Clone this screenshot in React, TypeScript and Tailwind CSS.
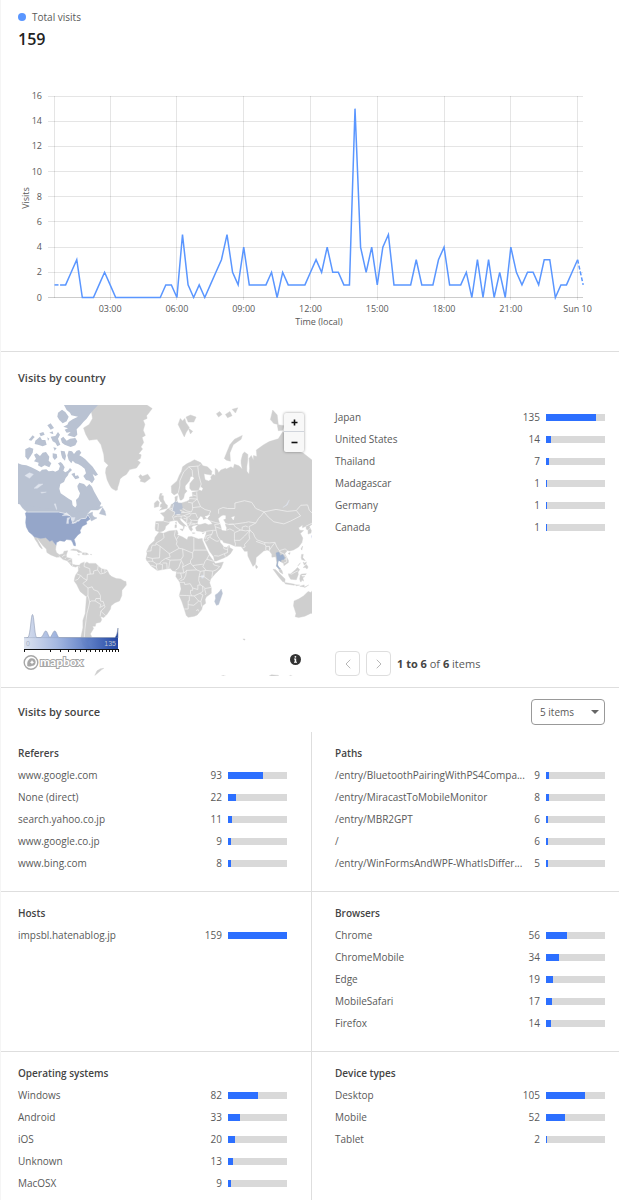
import React, { useState } from 'react';
import { ChevronLeft, ChevronRight } from 'lucide-react';

interface Row {
  label: string;
  count: number;
}

const TOTAL = 159;

const visits = [
  1, 1, 1, 2, 3, 0, 0, 0, 1, 2, 1, 0, 0, 0, 0, 0, 0, 0, 0, 0, 1, 1, 0, 5, 1, 0, 1, 0, 1, 2, 3, 5,
  2, 1, 4, 1, 1, 1, 1, 2, 0, 2, 1, 1, 1, 1, 2, 3, 2, 4, 2, 2, 1, 1, 15, 4, 2, 4, 1, 4, 5, 1, 1, 1,
  1, 3, 1, 1, 1, 3, 4, 1, 1, 1, 2, 0, 3, 0, 3, 0, 2, 0, 4, 2, 1, 2, 2, 1, 3, 3, 0, 1, 1, 2, 3, 1,
];

const timeTicks = [
  { index: 10, label: '03:00' },
  { index: 22, label: '06:00' },
  { index: 34, label: '09:00' },
  { index: 46, label: '12:00' },
  { index: 58, label: '15:00' },
  { index: 70, label: '18:00' },
  { index: 82, label: '21:00' },
  { index: 94, label: 'Sun 10' },
];

const countries: Row[] = [
  { label: 'Japan', count: 135 },
  { label: 'United States', count: 14 },
  { label: 'Thailand', count: 7 },
  { label: 'Madagascar', count: 1 },
  { label: 'Germany', count: 1 },
  { label: 'Canada', count: 1 },
];

const sources: { title: string; rows: Row[] }[] = [
  {
    title: 'Referers',
    rows: [
      { label: 'www.google.com', count: 93 },
      { label: 'None (direct)', count: 22 },
      { label: 'search.yahoo.co.jp', count: 11 },
      { label: 'www.google.co.jp', count: 9 },
      { label: 'www.bing.com', count: 8 },
    ],
  },
  {
    title: 'Paths',
    rows: [
      { label: '/entry/BluetoothPairingWithPS4Compa...', count: 9 },
      { label: '/entry/MiracastToMobileMonitor', count: 8 },
      { label: '/entry/MBR2GPT', count: 6 },
      { label: '/', count: 6 },
      { label: '/entry/WinFormsAndWPF-WhatIsDiffer...', count: 5 },
    ],
  },
  { title: 'Hosts', rows: [{ label: 'impsbl.hatenablog.jp', count: 159 }] },
  {
    title: 'Browsers',
    rows: [
      { label: 'Chrome', count: 56 },
      { label: 'ChromeMobile', count: 34 },
      { label: 'Edge', count: 19 },
      { label: 'MobileSafari', count: 17 },
      { label: 'Firefox', count: 14 },
    ],
  },
  {
    title: 'Operating systems',
    rows: [
      { label: 'Windows', count: 82 },
      { label: 'Android', count: 33 },
      { label: 'iOS', count: 20 },
      { label: 'Unknown', count: 13 },
      { label: 'MacOSX', count: 9 },
    ],
  },
  {
    title: 'Device types',
    rows: [
      { label: 'Desktop', count: 105 },
      { label: 'Mobile', count: 52 },
      { label: 'Tablet', count: 2 },
    ],
  },
];

// Outlines are "lon,lat" pairs, projected with Web Mercator below
const land = [
  // Greenland
  '-73,78.4 -68,79 -65,80 -66,81 -61,82.3 -30,83 -18,82 -12,81.4 -15,80.8 -17,80.4 -16.5,80 -20,79.7 -18.5,79 -20,78 -18,77 -21,76.6 -19.5,75.5 -22,74.5 -20.5,74 -24,72.8 -21.8,72.5 -22.5,71.5 -25,71 -22.5,70.3 -26,68.6 -32,68.1 -35,66.4 -38,65.7 -40.5,64.8 -41.5,63 -42.5,61.5 -43,60.2 -44.5,60 -48,61 -50,62.5 -52,64.5 -53.5,67 -53,68.5 -51,69.5 -54.5,70.6 -55,72.5 -57.5,75 -61,76.2 -68,76 -71,77.2',
  // Mexico and Central America
  '-114.8,32.3 -112,29 -109,25.5 -106,22.8 -105.5,20 -102,18 -97,16 -94,16.2 -91,14 -87.5,13 -85.7,11 -83.5,8.5 -80,7.4 -78,8.5 -77,7 -77,9 -80,9.2 -83,10 -83.5,15 -88,15.8 -88.3,18 -87,21.5 -90.3,21 -91,19 -94.5,18.2 -97,20 -97.8,22.5 -97.3,26 -101,29.8 -103,29 -106.5,31.8 -111,31.3',
  '-117,32.5 -114.8,32 -112.5,28 -109.5,23.2 -110.5,23.3 -112.2,25 -114,28 -116,30.5',
  '-84.5,22 -82,23 -78,22.3 -74.3,20.2 -77.5,20 -79,21.5',
  '-74,19.8 -70,19.7 -68.5,18.5 -71,18 -74,18.3',
  '-78.2,18.4 -76.4,18.1 -77.5,17.9',
  '-67,18.4 -65.7,18.4 -66,18',
  // South America
  '-77.5,8 -75.5,10.6 -72,12 -71.5,10.7 -70,12 -68,10.7 -62,10.7 -60,8.5 -57,6 -52,5 -50,1 -48,-1 -44,-2.7 -40,-3 -37,-5 -35.3,-5.3 -35,-8.5 -38.8,-13 -39,-17.5 -41,-22 -45,-23.5 -48.5,-26 -49,-28.5 -52,-32.5 -55,-35 -58,-34.2 -56.8,-36.5 -58,-38.3 -62,-39 -62.5,-41 -65,-41 -64,-42.5 -67,-46 -65.8,-47.5 -69,-50.5 -68.5,-52.5 -65.5,-54.8 -69,-55.5 -73.5,-52.5 -75.5,-48.5 -73.5,-42 -73.5,-37 -71.5,-32 -70.3,-18.5 -76,-14 -79,-8 -81.3,-5 -80.8,-2 -80,0.5 -77.5,4',
  // Africa
  '-17.5,14.7 -16.5,19 -17,21 -14.5,26 -10,29.5 -9.5,32 -6,35.8 -2,35.1 3,36.8 10,37.3 11,35 10.2,34 15,32.4 19,30.3 20,32.5 23,32.7 29,30.9 32.5,31.2 32.6,29.8 34.5,26 35.6,23.5 37.3,20.5 38.5,18 41,14.8 43.2,12 44,10.5 48,11.2 51.2,11.8 49,6.5 44,1.5 40,-3 39,-6.5 40.5,-11 40.5,-15.5 36,-18.8 35,-21 35.5,-24 32.7,-26 32,-29 28,-33 25.5,-34 20,-34.8 18.3,-33.5 16.5,-28.5 14.5,-23 12,-17.5 13.7,-12 12.5,-6 9,-1 9.7,3.5 6,4.3 4,6.4 0,5.7 -7.5,4.4 -13,8.5 -15,11 -16.8,13',
  // Europe and Asia
  '-9,37 -9.4,38.7 -8.8,43.2 -1.8,43.4 -1.2,46 -4.7,48.4 -1.5,48.7 1.6,50.7 4,51.5 5,53.3 8.5,53.8 8.2,57 10.5,57.6 10,55 11,54 14,54 18.5,54.8 21,55.5 21.2,57 24,57.2 23.5,59.2 28,59.6 30,60 23,60 21.3,61 21.5,63 25.3,65 24,65.8 22,65.6 21,64 17.3,62 17.3,60.6 19,59.8 16.7,58.5 16,56.5 14.2,55.5 12.8,55.5 11,59 7.5,58 5.2,59 5,62 10,64 12,66 14,67.5 15,69 19,70 22,70.5 25.5,71.1 31,70.3 33,69.3 37,69 41,67.5 40.5,66.2 34,66.7 34.5,65.5 35,64.5 38,64 40.5,64.6 40,65.5 42,66.5 44,66 44,68.5 46,68 47,67 49,68 53,68.5 54,68.3 58,69 60,68.5 61,69.8 65,69.3 68,68.3 67,70 67,71 68.5,72.8 70,73.2 73,72.6 72.8,71 72,69 72,67.5 74,66.5 74.5,68.5 74,71.5 76,72.3 78,71 78,72.3 81,72 80.5,73.7 87,75 92,75.7 100,76.3 104,77.7 108,76.8 113,76 108,74 113,73.8 122,73 130,71 140,72 140,50 131,43 129.5,41 127.5,39.8 129.4,37 129,35.2 126.5,34.5 126.5,37.5 125,38 124.5,40 121.5,39 121.5,40.8 118,39 119,37.3 122.5,37 119.5,35 121.8,31.5 121,28 118,24.5 113.5,22.2 110,21.3 108,21.6 105.8,19 109,13.5 109,11.5 105,8.7 104.8,10.5 102.5,12 101,13.5 100,13.3 99.3,9.5 100.5,7.2 103.3,4.5 104,1.4 101.3,3 100.3,6 98.3,8.5 98.7,11.5 97.7,16.5 94.3,16 94.2,18.5 92,21.5 90,22 87,21.3 85,19.5 80.3,15.7 80,12 79.5,10 77.5,8.1 76,11 73,17 72.7,21 70,21 69,22.3 67,25 61.5,25.2 57,27 51.5,28 50,30 48,30 48.5,28 50.5,26 51.5,24.5 54,24.2 56.3,26 57,24 59.8,22.5 57.5,19 55,17 52,15.6 45,12.8 43.3,12.7 42.5,16.5 39,21 37,25 34.8,29 34,30 34.4,31.3 36,35 36,36.8 32.5,36.1 30.5,36.5 27.5,36.8 26.5,39 29,41 31,41.2 35,42 38,41 41.5,41.6 39.5,43.7 37,45 39,47.2 35,46.2 36.5,45.3 33.5,44.5 32.7,46 31,46.6 28.8,44.5 28,41.8 29,41 26,40.7 23.8,40.3 23,39 24,38 22.7,36.5 21.3,37.7 19.4,41 19,42 14,45.3 12.3,45.2 13.6,43.6 16,41.8 18.5,40 16.8,40.4 16,38 15.6,40 12.3,41.7 10.2,43.9 7.5,43.8 3.2,43.2 3,41.8 0,40 -0.5,38 -2,36.8 -5.5,36',
  // British Isles and Iceland
  '-5.5,50 1.3,51.2 1.6,52.8 0,53.5 -2,55.8 -2,57.6 -4,57.7 -3,58.6 -5,58.6 -6,56.5 -4.8,54.8 -3,54 -4.5,53.2 -5,51.8 -3,51.5',
  '-10,51.6 -6.3,52.2 -5.7,54.5 -7.5,55.3 -10,54',
  '-24,65.6 -22.5,66.4 -20.5,65.8 -16,66.5 -13.6,65 -18.5,63.4 -22.7,63.9 -22,64.5',
  // Arctic
  '11,79 13,80 15,79.6 17,80 18,79.3 21,78.5 18,77.5 16.5,76.7 14,77.8',
  '18,80.2 22,80.5 27,80.2 25,79.4 20,79.4',
  '20,78.4 24,77.8 22,77.3',
  '52,71.5 54,73 57,75 61,76.2 68,77 67,76.2 60,75 57,73 57.5,70.7 54,71',
  '45,80.7 48,81 50,80.6 47,80.2', '53,80.6 57,81 59,80.4 55,80.1', '59,81.3 64,81.5 62,80.8',
  '93,79.8 95,81.2 99,80.5 100,79 96,79.2', '99,79 105,78.8 104,78 100,77.9',
  // Mediterranean
  '12.5,38 15.5,38.2 15,36.8', '8.2,39 8.3,41 9.6,41 9.6,39.2', '8.6,42.5 9.5,43 9.4,41.5', '23.6,35.5 26.2,35.2 24,34.9', '32.3,35 34.5,35.6 33,34.6',
  // Southern and eastern Asia
  '80,9.6 81.8,7.5 80.5,6 79.8,7.5',
  '95.3,5.6 97.5,5.2 103.7,-1 106,-3 105.8,-5.8 104,-5.5 100.5,-1.5',
  '105.2,-6.2 108.5,-6.7 114.5,-7.7 114.3,-8.7 106.5,-7.4',
  '109,1.5 111,1.5 115,5 117,7 119,5.2 117.5,3 117.8,1 116,-3.8 111,-3.3 109.3,-0.5',
  '119.5,0.5 121,1.2 125,1.6 124,0.5 120.3,0.4 121.3,-1 123.5,-1 121.8,-2 122.5,-5 121,-4 120.3,-5.5 119.5,-5.3 119,-3',
  '115,-8.2 119,-8.5 116,-9', '119,-9.5 123,-8.3 123,-10.3 127,-8.4 124,-10.3',
  '120.3,16 120.8,18.5 122.2,18.4 121.7,15.8 124,13 120.8,14', '122,7 125,9.7 126.5,7.5 125.5,5.8 124,7', '122,11.8 123.5,11 125,12 124.5,10.2 123,9.2', '117.3,8.5 119.5,11.2 118.3,9.2',
  '120.2,23 121.6,25.3 121,22', '108.7,19.2 110.5,20.1 110,18.4',
  // Australia
  '136,-12.2 131,-12 129,-15 126.5,-14 124,-16.5 122.3,-18 118,-20.4 114,-22 113.5,-26 115.7,-32 115,-34.3 118,-35 123.5,-34 129,-31.7 136,-34',
  // Southern islands and Antarctic coast
  '68.6,-49 70.5,-49.1 70,-49.7',
  '-55,-63.3 -58,-63.5 -61,-64.3 -63,-66 -60.5,-65.2 -57,-63.9',
  '48,-66.5 51,-66 54,-66.4', '92,-66.2 94,-65.8 100,-66 101,-66.5', '109,-66.4 111,-66 113,-66.4',
];

const southernCanada = [
  '-132,57 -90,56 -83,52.8 -80,51.3 -79,51.2 -60,52.2 -56,52 -60,50.2 -66.5,50.2 -70,47.5 -65,49 -65,47.2 -63.5,46 -61,45.5 -66,43.5 -67,45 -67.8,47 -69.2,47.4 -71,45.2 -75,45 -79,43.3 -82.5,42 -82.5,45.3 -84.5,46.5 -88.5,48 -95,49 -123,49 -125,50 -127.5,51.5 -130,54 -132,56',
  '-59,48 -53,47 -54,49.5 -56,51.5',
];

// Northern coast and the Arctic islands are drawn straight in map space, three units per pixel
const northernCanada = [
  'M0 178 12 182 25 184 40 190 52 196 66 203 72 197 85 196 92 202 105 200 112 203 122 198 126 186 120 178 128 174 134 180 140 190 136 200 142 205 150 200 156 192 162 198 152 208 150 214 143 222 138 234 127 240 124 254 128 268 140 276 152 284 162 290 164 306 171 312 176 304 174 288 182 280 186 268 180 256 178 246 184 236 198 240 206 248 214 240 222 248 228 262 236 276 244 290 250 298 244 310 171 326 0 300Z',
  // Baffin
  'M152 140 162 142 168 150 176 140 184 138 190 146 184 154 192 158 202 166 212 176 224 188 232 200 240 212 232 216 224 210 230 226 222 238 214 230 204 228 196 216 204 208 200 194 190 186 180 180 172 178 164 170 160 178 152 168 148 154Z',
  'M160 210 170 206 172 216 180 214 184 222 172 226Z',
  'M128 140 140 142 144 156 141 170 133 162 130 152Z',
  'M104 148 116 150 118 160 110 168 104 160Z',
  // Victoria and Banks
  'M48 152 56 148 66 156 74 146 84 144 94 158 92 170 100 178 94 190 80 184 70 190 60 184 62 176 48 172 54 164Z',
  'M22 136 34 130 46 134 44 146 38 156 30 168 22 158Z',
  // Ellesmere and Axel Heiberg
  'M138 3H240L228 16 216 30 206 44 196 54 188 64 176 76 178 92 170 100 148 94 158 84 146 86 140 77 150 73 136 68 148 62 152 54 164 46 180 38 160 34 156 26 146 18Z',
  'M120 26 132 17 142 24 152 38 146 52 134 58 124 48 118 38Z',
  // Devon, Bathurst, Melville
  'M128 104 136 98 146 110 156 104 172 102 178 112 172 124 158 129 140 122 132 116Z',
  'M98 98 112 96 120 84 126 92 120 104 127 122 118 127 112 116 104 112Z',
  'M52 110 66 98 72 108 82 108 86 122 74 127 60 122 50 120Z',
  'M32 108 44 94 50 99 40 110Z',
  'M64 88 76 84 80 92 68 97Z',
  'M88 64 98 58 108 72 98 77Z',
  'M94 86 104 82 106 91Z',
  'M88 100 94 104 90 110Z',
  'M106 130 116 132 110 140Z',
];

const unitedStates =
  '-124.7,48.4 -124,46 -124.4,42.5 -123.8,39.5 -121.5,36 -118.5,34 -117,32.5 -111,31.3 -106.5,31.8 -103,29 -101,29.8 -97.3,26 -97,28 -94,29.5 -90,29 -88,30.4 -84,30 -82.7,28 -81.7,25.8 -80.2,25.3 -80,27 -81.3,30.5 -78,33.9 -75.6,35.3 -76,37 -74,40 -70,41.6 -70.5,43 -67,44.8 -67.8,47 -69.2,47.4 -71,45.2 -75,45 -79,43.3 -82.5,42 -83.5,45.5 -84.5,46.5 -88.5,48 -95,49 -123,49';

const lowTraffic = [
  // Germany, Madagascar
  '6.2,53.4 8.5,54.8 10,54.8 11,54 14.2,53.8 15,51 12.3,50.2 13.8,48.7 12.8,47.6 7.7,47.6 8.1,49 6.2,49.8',
  '49.3,-12 50.4,-15.7 48.5,-21 47,-25 45,-25.6 43.4,-22.5 44.3,-20 44,-17 46,-15.7 48,-13.8',
];
const thailand = '98,19.7 100.2,20.4 101.2,19.2 101.5,17.6 104,18.3 105.6,15.4 105.3,14.3 102.5,13.7 102.5,12.3 101,12.8 100.3,13.5 99.5,11 99.3,9.3 100.5,7.2 102,6.2 100.5,6 98.4,8.3 99.2,11.8 98.8,15.5';
const kyushu = '129.8,33.3 131.8,33.7 131.2,31.2 130.2,31.3';

const water = [
  '47,45 49,46.4 51,47 53,46.8 53,45 51,44.5 53,42 52.7,41 53.8,39 53.5,37 50,37.4 49,40.5',
  '58.5,45.8 61,46.4 60,44.2',
  '39.2,47.2 35,46.2 37,45.6',
  '29.5,60.5 31,61.6 32.8,61 32,60',
];
const lakes = [
  '-88,41.8 -86.3,41.8 -86.3,44 -85,45.8 -87.5,45.5', '-83.5,42 -79,42.8 -80,42.2', '-92,46.8 -88,48.7 -84.8,46.7 -88,46.9', '-83.5,45.8 -80.5,45.8 -81.7,43.3 -83.4,44', '-79.5,43.5 -76.3,44 -77,43.3',
  '-99,53.5 -97.8,53.6 -96.6,50.6 -97,50.4', '-117,61 -113,62.7 -109,62.8 -114,61', '-125,66 -121,67 -117.5,66.5 -121,65', '-111,59.2 -106,59.3 -110,58.8',
  '31.8,0.3 34,0.2 33.5,-2.3 32,-2.4', '104,51.6 108,53 109.8,55.6 107,53',
];

const borders = [
  // Americas
  '-95,17 -92.2,14.6', '-92,16 -90.5,17.8 -89,17.8', '-89.5,14.5 -88.5,15.7', '-87,13.2 -83.2,15', '-85.5,11.2 -83.7,11', '-83,8.3 -82.5,9.6',
  '-77.5,8 -76,7.2', '-72,12 -72.5,8 -70,7 -67.5,6 -67,1.2', '-67,1.2 -64,1.5 -64,4 -60.5,5 -60,8.5', '-60.5,5 -58,1.3 -54,2.3 -51.5,4.3', '-57,5.9 -57.3,3.3 -56,2', '-54,5.8 -54,2.3', '-67,1.2 -69.5,1 -69.9,-4.2 -73,-2.5 -75.5,0 -79,1.5', '-75.5,0 -78,-3.5 -80.3,-4.3', '-69.9,-4.2 -73.5,-7 -70.5,-10 -69,-11 -69,-17.5 -70.3,-18.5', '-69,-11 -65.3,-10 -64,-12.5 -60,-14 -58,-17.5 -58,-20 -62,-20 -62.7,-22 -66,-22 -67.5,-23 -69,-17.5', '-58,-20 -57.8,-22.2 -55.5,-22.5 -54.5,-25.5 -58.5,-27.3 -57.5,-25 -62.7,-22', '-54.5,-25.5 -53.8,-27 -57.6,-30.2 -58.2,-34', '-57.6,-30.2 -53.4,-33.5', '-67.5,-23 -68.5,-27 -70,-32 -70.8,-37 -71.8,-43 -72.5,-50 -68.5,-52.3', '-71.7,19.7 -71.7,18',
  // Africa
  '-17,21 -13,21.4 -13,23 -12,26 -8.7,26 -8.7,27.6 -3,30.5 -1.5,32 -2,35', '-8.7,27.2 -4.8,25 3,19.2 4.3,19.5 12,23.5 9.5,26.5 10,29 9.5,30.3 7.7,33.5 8.5,37', '9.5,30.3 11.5,33', '12,23.5 15,23 24,19.5 24,20 25,22 25,31.7', '25,22 36.5,22', '15,23 15.5,17 13.5,13.8 14,12.8 15.5,10 15,7.5 22,11 24,8.8 27.5,5', '24,19.5 24,15.7 22,13 22,11', '13.5,13.8 4,13.5 3.5,11.8 2.7,6.4', '4,13.5 0,15 -4,12.5 -5.5,10.3 -8,10.2 -8.3,7.5 -7.5,4.4', '3,19.2 4,16 0,15', '-5,25 -5.5,15.5 -12,15 -11.5,12.4 -8,10.2', '-16.5,16 -12,15', '-16.7,12.4 -13.7,12.6 -11.5,12.4', '-13,9 -10.5,8.4 -8.3,7.5', '-5.5,10.3 -2.8,9.7 -3,5', '-2.8,11 1,11 1.2,6', '13.5,12.5 11.5,6.6 8.7,4.7', '15,7.5 16.2,2.2 9.8,2.2', '16.2,2.2 18.5,4.5 27.5,5 30.8,3.6 29.6,-1 29.3,-4.4 30.7,-8.3 28.5,-8.5 28.5,-12.3 24,-11 21.8,-7.3 17,-8 16.6,-6 12.5,-6', '18.5,4.5 17.8,0 16,-3.5 13,-4.6', '13.3,2.2 14.3,-2 11.3,-3.9', '12,-17.3 18.5,-17.5 23.3,-17.7 22,-16 22,-13 24,-13 24,-11', '21,-18.2 21,-22 20,-22 20,-28.5 16.5,-28.5', '20,-25 25,-25.6 29.3,-22.2 25.3,-17.8 23.3,-17.7', '29.3,-22.2 31.3,-22.4 32,-26.7', '31.3,-22.4 33,-17 30.3,-15.7 33,-14 32.8,-9.3 30.7,-8.3', '25.3,-17.8 30.3,-15.7', '32.8,-9.3 35,-11.5 40.4,-10.5', '34.5,-11.5 35.8,-16 35,-17', '29.6,-1 34,-1 39.2,-4.7', '30.8,3.6 34,4.3 34,-1', '34,4.3 36,4.5 41.8,3.9 41,-1.7', '41.8,3.9 45,5 48,8 43,9.3 42,11', '36,4.5 33,8 35,12.5 36.5,14.3 42.5,12.5', '36.5,14.3 38.5,18', '24,8.8 28,9.4 33,10', '27,-29.8 28.8,-28.8 29.2,-30.3',
  // Europe
  '-8.8,41.9 -6.5,41.8 -7,37.3', '-1.8,43.4 3.2,42.5', '2.5,51 6,49.6 8.1,49 7.5,47.5 6,46.3 7.5,43.8', '7,45.9 10.5,46.6 13.7,46.5 13.8,45.5', '9.5,47.5 13,47.6', '3.4,51.3 6,50.8 6.2,49.8', '7,53.3 6,50.8', '15,51 18.8,49.6 22.8,49.1 24,50.8 23.5,54 19.8,54.4', '17,48.8 12.5,50.2', '13.8,48.7 17,48.8 22,48.3 16.2,46.8 13.7,46.5', '16.2,46.8 18.8,45.9 21,46.2 22.8,48 26.6,48.2 28.2,45.5', '18.8,45.9 19,44.8 15.8,45.2', '21.2,45 22.6,44 28.6,43.8', '22.6,44 22.4,42.3 26.3,41.7 28,42', '19.3,42 22.4,42.3 21,40.8', '20,39.8 21,40.8 26.3,41.5', '19,44.8 18.5,42.5', '23.5,54 28,56 31,52 24,51.5', '31,52 35,50.4 40,49.6 38.3,47.2', '21,56.3 28,56 27.5,59.2', '24,58 27.3,57.5', '30,60.5 31.5,62.8 29.5,66 28.5,69 30.8,69.8', '24,65.8 23.5,67.9 20.6,69 28.8,69.2', '11.2,59 12.5,62 12.5,64 16,67.3 20.6,69', '9,54.8 10,54.8',
  // Asia
  '47,48 47,50.5 51,51.6 55,51 61.5,51 61.5,54 70,55.2 76.5,54.3 80,51 87.3,49.1 85,47 82.5,45.2 80,42.2 73.5,43 71,42.5 66,42 61,41.5 56,41.3 52.5,42', '87.3,49.1 91,46 96,43 105,41.6 111,43.5 119.8,46.7 116,49.9 108,49.4 98,50.5 87.3,49.1', '116,49.9 120,52.8 126,53 127.5,50 131,47.8', '131,45 131,43', '124.3,40 130.5,42.3', '126.7,37.8 128.3,38.6', '80,42.2 74,39.8 74.8,37.3 71,36.8 66.5,37.4 61,35.5 61,31.5 61,29.8 66,29.8 70,33 74.8,37.3', '56,41.3 60,41.5 62,39.5 66.5,37.4', '67.8,37.2 68,39.5 71,40.2 73,39.5', '54,37.3 57,38.2 61,36.5', '61,29.8 62,27 61.6,25.2', '74.8,37.3 78,35 79,32.5 81,30.2 88,28 92,27.8 97,28.2 98.7,24.5 101,21.5 106,23 108,21.6', '74.8,37.3 74,34.5 74.5,31 70,26.5 70.5,24.5 68,23.7', '80.3,29 88,26.5 88,28', '88.3,26.5 89,25 88.8,22', '89,25 92.2,25 92.2,21.5', '92.2,22 94,24.5 97,28', '101,21.5 102,20 105,18.8 107.5,15.5 107.5,12 105,11', '105.5,14.3 107.5,14.5', '48.5,30 46,33 44.8,37.2 44,39.7 43.5,41.2 47,41.5 48.3,42', '44.8,37.2 42.3,37.2 36,36.5', '41,34.4 42,37', '39,32.2 41,34.4 35.9,33', '47.7,30 46.5,29.1 44.7,29.2 39,32.2 37,31.5 38,30.5 36,29.2 35,29.4', '35.8,33 35.5,31', '44,39.7 48.8,38.5', '40,43.5 44,42.5 48.5,41.8', '55.7,26 55,22.5 52,22.9 51.2,24.4', '55,20 52,19 47,17 43,17.3', '52,19 53,16.6', '55,22.5 55,20', '109.5,1.8 112,1.2 115,3 117.5,4.2',
];

const project = (pair: string) => {
  const [lon, lat] = pair.split(',').map(Number);
  const mercator = Math.log(Math.tan(Math.PI / 4 + (lat * Math.PI) / 360));
  return `${(147.7 + 1.126 * lon).toFixed(1)},${(170.5 - 64.5 * mercator).toFixed(1)}`;
};
const toPoints = (outline: string) => outline.split(' ').map(project).join(' ');

function Shapes({ outlines, fill }: { outlines: string[]; fill: string }) {
  return (
    <g fill={fill} stroke={fill} strokeWidth="0.4" strokeLinejoin="round">
      {outlines.map((outline) => (
        <polygon key={outline} points={toPoints(outline)} />
      ))}
    </g>
  );
}

function VisitsChart() {
  const x = (i: number) => 53.5 + i * 5.565;
  const y = (v: number) => 217.5 - v * 12.59;
  const points = (from: number, to: number) =>
    visits.slice(from, to + 1).map((v, i) => `${x(from + i)},${y(v)}`).join(' ');
  const last = visits.length - 1;

  return (
    <svg viewBox="0 0 618 271" className="block w-full" role="img" aria-label="Visits over time">
      <g stroke="#000" strokeOpacity="0.1" shapeRendering="crispEdges">
        {[2, 4, 6, 8, 10, 12, 14, 16].map((v) => (
          <line key={v} x1="47" x2="582" y1={y(v)} y2={y(v)} />
        ))}
        <line x1="53.5" x2="53.5" y1={y(16)} y2={y(0)} />
        {timeTicks.map((t) => (
          <line key={t.index} x1={x(t.index)} x2={x(t.index)} y1={y(16)} y2="220" />
        ))}
        <line x1="47" x2="582" y1={y(0)} y2={y(0)} strokeOpacity="0.2" />
      </g>
      <g fill="none" stroke="#5a96ff" strokeWidth="1.5">
        <polyline points={points(0, 1)} strokeDasharray="4 2" />
        <polyline points={points(1, last - 1)} />
        <polyline points={points(last - 1, last)} strokeDasharray="4 2" />
      </g>
      <g fontSize="9" fill="#595959">
        {[0, 2, 4, 6, 8, 10, 12, 14, 16].map((v) => (
          <text key={v} x="41" y={y(v) + 3} textAnchor="end">{v}</text>
        ))}
        {timeTicks.map((t) => (
          <text key={t.index} x={x(t.index)} y="232" textAnchor="middle">{t.label}</text>
        ))}
        <text x="318" y="245" textAnchor="middle">Time (local)</text>
        <text transform="translate(28 118) rotate(-90)" textAnchor="middle">Visits</text>
      </g>
    </svg>
  );
}

function MapLegend() {
  const ticks = [6, 32, 42, 50, 57, 62, 68, 72, 77, 81, 84, 88, 91, 94, 97, 100];
  return (
    <g>
      <defs>
        <linearGradient id="legend-scale">
          <stop offset="0" stopColor="#d9e0ee" />
          <stop offset="0.35" stopColor="#9db2de" />
          <stop offset="0.7" stopColor="#4f72c0" />
          <stop offset="1" stopColor="#12389c" />
        </linearGradient>
      </defs>
      <path
        d="M6 233 L10 232.5 C12.5 230 13 209.5 14.5 209.5 C16 209.5 16.5 230 18.5 232.5 H23 C25.5 231 26 226 27.8 226 C29.5 226 30 231 32 232.5 C34 231 35 226 36.7 226 C38.5 226 39 231 41 232.5 H97 C98.5 231 99.5 227 100 223 V233 Z"
        fill="url(#legend-scale)"
        stroke="#8f9bb3"
        strokeWidth="0.6"
      />
      <rect x="6" y="233" width="94" height="11" fill="url(#legend-scale)" fillOpacity="0.92" />
      <path d="M6 244.5 H100.5" stroke="#111" />
      <g stroke="#111" strokeWidth="1">
        {ticks.map((t) => (
          <line key={t} x1={t + 0.5} x2={t + 0.5} y1="244" y2="247" />
        ))}
      </g>
      <g fontSize="7" fontFamily="Liberation Sans, Arial, sans-serif" fill="#bcc3d1">
        <text x="8" y="241" fill="#a9b2c4">0</text>
        <text x="98" y="241" textAnchor="end">135</text>
      </g>
    </g>
  );
}

function MapboxLogo() {
  return (
    <g stroke="#a6a6a6">
      <circle cx="13" cy="257.5" r="6.8" fill="#fff" strokeWidth="1.4" />
      <path d="M9.6 261 C9 256 11 253.5 13.8 253.5 A3.6 3.6 0 0 1 13.8 260.7 C12.5 261.3 11 261.3 9.6 261 Z" fill="#a6a6a6" strokeWidth="0.5" />
      <path d="M14 255 l0.8 1.5 1.5 0.7 -1.5 0.7 -0.8 1.5 -0.7 -1.5 -1.5 -0.7 1.5 -0.7 Z" fill="#fff" stroke="none" />
      <text
        x="22"
        y="261"
        fontSize="12"
        fontWeight="700"
        fontFamily="Lato, sans-serif"
        fill="#fff"
        strokeWidth="2"
        paintOrder="stroke"
      >
        mapbox
      </text>
    </g>
  );
}

function WorldMap() {
  return (
    <div className="relative">
      <svg viewBox="0 0 294 271" className="block w-full" role="img" aria-label="Visits by country map">
        <Shapes outlines={land} fill="#cfcfcf" />
        <Shapes outlines={southernCanada} fill="#b9c2d2" />
        <g transform="translate(0 -1) scale(0.3333)" fill="#b9c2d2">
          {northernCanada.map((d) => (
            <path key={d} d={d} />
          ))}
        </g>
        <Shapes outlines={[unitedStates]} fill="#95a6c9" />
        <Shapes outlines={lowTraffic} fill="#b9c2d2" />
        <Shapes outlines={[thailand]} fill="#9db0cd" />
        <Shapes outlines={[kyushu]} fill="#7b8fd0" />
        <Shapes outlines={water} fill="#fff" />
        <Shapes outlines={lakes} fill="#dfe4ee" />
        <g fill="none" stroke="#f3f3f3" strokeWidth="0.7" strokeLinejoin="round">
          {borders.map((line) => (
            <polyline key={line} points={toPoints(line)} />
          ))}
          <polyline points={toPoints('-123,49 -95,49 -88.5,48 -84.5,46.5 -82.5,42 -79,43.3 -75,45 -71,45.2 -69.2,47.4 -67,45')} />
        </g>
        <MapLegend />
        <MapboxLogo />
      </svg>
      <div className="absolute right-2 top-2 flex w-5 flex-col divide-y divide-gray-300 rounded-xs bg-[#f8f8f8] shadow-[0_0_3px_rgba(0,0,0,0.4)]">
        <button type="button" aria-label="Zoom in" className="flex h-[19px] items-center justify-center">
          <svg width="7" height="7" viewBox="0 0 7 7" stroke="#111" strokeWidth="1.6">
            <path d="M0.5 3.5 H6.5 M3.5 0.5 V6.5" />
          </svg>
        </button>
        <button type="button" aria-label="Zoom out" className="flex h-5 items-center justify-center">
          <svg width="7" height="7" viewBox="0 0 7 7" stroke="#111" strokeWidth="1.6">
            <path d="M0.5 3.5 H6.5" />
          </svg>
        </button>
      </div>
      <button type="button" aria-label="Map attribution" className="absolute bottom-[11px] right-[11px]">
        <svg width="11" height="11" viewBox="0 0 11 11" className="block">
          <circle cx="5.5" cy="5.5" r="5.5" fill="#333" />
          <path d="M4 4.5 H6.2 V7.8 H7 V8.8 H4 V7.8 H4.7 V5.4 H4 Z" fill="#fff" />
          <circle cx="5.4" cy="2.8" r="0.9" fill="#fff" />
        </svg>
      </button>
    </div>
  );
}

function StatTable({ rows, label }: { rows: Row[]; label: string }) {
  return (
    <table aria-label={label} className="w-full border-collapse">
      <tbody>
        {rows.map((row) => (
          <tr key={row.label} className="h-[22px]">
            <th scope="row" className="w-full whitespace-nowrap p-0 text-left font-normal">{row.label}</th>
            <td className="p-0 text-right">{row.count}</td>
            <td className="p-0 pl-1.5">
              <div className="h-[7px] w-[59px] bg-[#d9d9d9]">
                <div className="h-full bg-[#2c6fff]" style={{ width: `${(row.count / TOTAL) * 100}%` }} />
              </div>
            </td>
          </tr>
        ))}
      </tbody>
    </table>
  );
}

export default function App() {
  const [items, setItems] = useState('5');

  return (
    <main className="min-h-screen w-full border-l border-[#f5f5f5] bg-white font-['Open_Sans','Noto_Sans',sans-serif] text-[10px] leading-4 text-[#595959]">
      <section className="border-b border-[#dedede]">
        <div className="px-[17px] pt-[9px]">
          <div className="flex items-center gap-1.5">
            <span className="size-2 rounded-full bg-[#5a96ff]" />
            <span>Total visits</span>
          </div>
          <p className="mt-1 text-base leading-5 font-semibold text-[#222]">{TOTAL}</p>
        </div>
        <div className="mt-[31px]">
          <VisitsChart />
        </div>
      </section>

      <section className="border-b border-[#dedede] pb-[11px] pl-[17px] pr-3.5 pt-4">
        <h2 className="text-[11px] leading-5 font-semibold text-[#444]">Visits by country</h2>
        <div className="mt-[17px] grid grid-cols-[294fr_270fr] gap-x-[23px]">
          <WorldMap />
          <div className="flex flex-col justify-between pt-px">
            <StatTable rows={countries} label="Visits by country" />
            <div className="flex items-center gap-1.5">
              <button type="button" disabled aria-label="Previous page" className="flex size-[25px] items-center justify-center rounded-sm border border-[#dedede] text-[#b8b8b8]">
                <ChevronLeft size={16} strokeWidth={1.5} />
              </button>
              <button type="button" disabled aria-label="Next page" className="flex size-[25px] items-center justify-center rounded-sm border border-[#dedede] text-[#b8b8b8]">
                <ChevronRight size={16} strokeWidth={1.5} />
              </button>
              <p className="text-[11px]">
                <b className="text-[#444]">1 to 6</b> of <b className="text-[#444]">6</b> items
              </p>
            </div>
          </div>
        </div>
      </section>

      <section>
        <div className="flex items-center justify-between pb-[7px] pl-[17px] pr-3.5 pt-[11px]">
          <h2 className="text-[11px] leading-5 font-semibold text-[#444]">Visits by source</h2>
          <div className="relative">
            <select
              aria-label="Items per list"
              value={items}
              onChange={(e) => setItems(e.target.value)}
              className="block h-[26px] w-[74px] appearance-none rounded-sm border border-[#999] bg-white pl-2 text-[10px]"
            >
              <option value="5">5 items</option>
              <option value="10">10 items</option>
              <option value="15">15 items</option>
            </select>
            <svg width="8" height="4" viewBox="0 0 8 4" className="pointer-events-none absolute right-1.5 top-[11px]">
              <path d="M0 0 H8 L4 4 Z" fill="#666" />
            </svg>
          </div>
        </div>
        <div className="grid grid-cols-[311fr_307fr]">
          {sources.map((source, i) => (
            <div
              key={source.title}
              className={
                (i % 2 === 0 ? 'border-r pl-[17px] pr-6' : 'pl-[23px] pr-3.5') +
                (i < 4 ? ' border-b' : '') +
                ' border-[#dedede] pb-[17px] pt-[13px]'
              }
            >
              <h3 className="mb-[3px] font-semibold text-[#444]">{source.title}</h3>
              <StatTable rows={source.rows} label={source.title} />
            </div>
          ))}
        </div>
      </section>
    </main>
  );
}
